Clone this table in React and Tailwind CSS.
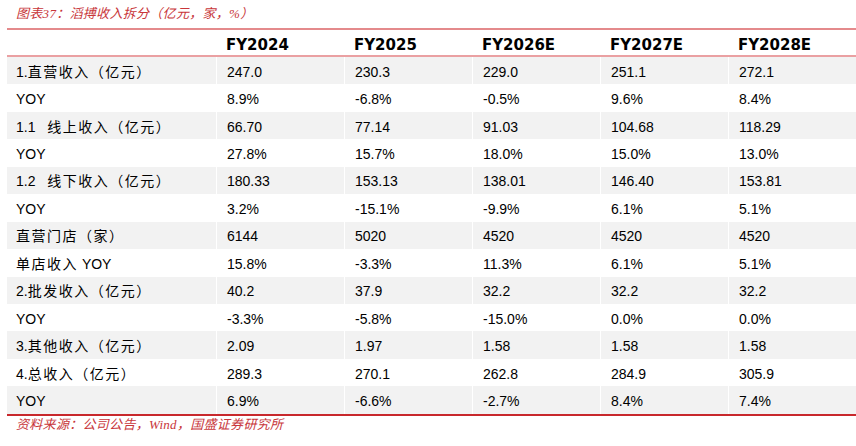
import React from 'react';

const cols = ['FY2024', 'FY2025', 'FY2026E', 'FY2027E', 'FY2028E'];

const rows = [
  ['1.直营收入（亿元）', '247.0', '230.3', '229.0', '251.1', '272.1'],
  ['YOY', '8.9%', '-6.8%', '-0.5%', '9.6%', '8.4%'],
  ['1.1   线上收入（亿元）', '66.70', '77.14', '91.03', '104.68', '118.29'],
  ['YOY', '27.8%', '15.7%', '18.0%', '15.0%', '13.0%'],
  ['1.2   线下收入（亿元）', '180.33', '153.13', '138.01', '146.40', '153.81'],
  ['YOY', '3.2%', '-15.1%', '-9.9%', '6.1%', '5.1%'],
  ['直营门店（家）', '6144', '5020', '4520', '4520', '4520'],
  ['单店收入 YOY', '15.8%', '-3.3%', '11.3%', '6.1%', '5.1%'],
  ['2.批发收入（亿元）', '40.2', '37.9', '32.2', '32.2', '32.2'],
  ['YOY', '-3.3%', '-5.8%', '-15.0%', '0.0%', '0.0%'],
  ['3.其他收入（亿元）', '2.09', '1.97', '1.58', '1.58', '1.58'],
  ['4.总收入（亿元）', '289.3', '270.1', '262.8', '284.9', '305.9'],
  ['YOY', '6.9%', '-6.6%', '-2.7%', '8.4%', '7.4%'],
];

const body = { fontFamily: '"Liberation Sans", "Noto Sans CJK SC", sans-serif' };
const head = { fontFamily: '"DejaVu Sans", "Noto Sans CJK SC", sans-serif' };
const note = { fontFamily: '"Liberation Serif", "Noto Sans CJK SC", serif' };

// chinese runs get a little spacing, latin runs none
function Label({ text }) {
  const parts = text.split(/([\u3000-\u9fff\uff00-\uffef]+)/).filter(Boolean);
  return (
    <div className="pl-[9px] pt-[3px] whitespace-pre">
      {parts.map((p, i) =>
        /[\u3000-\u9fff\uff00-\uffef]/.test(p)
          ? <span key={i} className="tracking-[1.5px]">{p}</span>
          : <span key={i}>{p}</span>
      )}
    </div>
  );
}

export default function App() {
  return (
    <div className="w-[856px] h-[446px] bg-white overflow-hidden text-black">
      {/* title */}
      <div className="h-[28px] pl-[16px] pt-[5px] text-[13px] italic leading-[17px] text-[#c8363a] tracking-[0.3px]" style={note}>
        图表37：滔搏收入拆分（亿元，家，%）
      </div>

      {/* table */}
      <div className="ml-[7px] w-[849px] border-t-2 border-[#e48a8c]">
        <div className="grid grid-cols-[209px_repeat(5,128px)] h-[27px] items-center border-b-2 border-[#eaa0a2] text-[15px] font-bold" style={head}>
          <div />
          {cols.map(c => (
            <div key={c} className="pl-[10px] pt-[4px]">{c}</div>
          ))}
        </div>

        {rows.map((r, i) => (
          <div
            key={i}
            className={`grid grid-cols-[209px_repeat(5,128px)] h-[27.45px] items-center text-[14px] ${i % 2 === 0 ? 'bg-[#f2f2f2]' : 'bg-white'}`}
            style={body}
          >
            <Label text={r[0]} />
            {r.slice(1).map((v, j) => (
              <div key={j} className="pl-[10px] pt-[3px] h-full flex items-center border-l border-white">{v}</div>
            ))}
          </div>
        ))}
      </div>

      {/* source */}
      <div className="ml-[7px] w-[849px] border-t-2 border-[#c8282c] pl-[9px] pt-[1px] text-[13px] italic leading-[16px] text-[#c8363a] tracking-[0.3px]" style={note}>
        资料来源：公司公告，Wind，国盛证券研究所
      </div>
    </div>
  );
}
